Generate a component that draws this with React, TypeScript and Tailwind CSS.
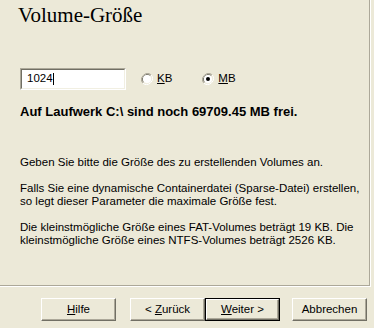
import React from "react";

const ui = { fontFamily: '"Liberation Sans", Arial, sans-serif' };

function Radio({ checked }: { checked?: boolean }) {
  return (
    <svg width="12" height="12" viewBox="0 0 12 12" className="shrink-0">
      <path d="M10.2 1.8 A6 6 0 0 0 1.8 10.2" fill="none" stroke="#ACA899" strokeWidth="1" />
      <path d="M1.8 10.2 A6 6 0 0 0 10.2 1.8" fill="none" stroke="#FFFFFF" strokeWidth="1" />
      <path d="M9.5 2.5 A5 5 0 0 0 2.5 9.5" fill="none" stroke="#716F64" strokeWidth="1" />
      <path d="M2.5 9.5 A5 5 0 0 0 9.5 2.5" fill="none" stroke="#F1EFE2" strokeWidth="1" />
      <circle cx="6" cy="6" r="4" fill="#FFFFFF" />
      {checked && <circle cx="6" cy="6" r="2" fill="#000000" />}
    </svg>
  );
}

function Button({
  children,
  isDefault,
}: {
  children: React.ReactNode;
  isDefault?: boolean;
}) {
  const inner = (
    <div className="flex-1 flex items-center justify-center border-t border-l border-white border-b border-r border-b-[#716F64] border-r-[#716F64] shadow-[inset_-1px_-1px_#ACA899] text-[11.5px] text-black">
      {children}
    </div>
  );
  return (
    <div
      className={
        isDefault
          ? "w-[75px] h-[23px] flex border border-black"
          : "w-[75px] h-[23px] flex"
      }
    >
      {inner}
    </div>
  );
}

export default function App() {
  return (
    <div
      className="w-[374px] h-[328px] bg-[#ECE9D8] flex flex-col overflow-hidden text-black"
      style={ui}
    >
      {/* content panel with etched edges */}
      <div className="w-[371px] h-[287px] border-r border-b border-white">
        <div className="w-[370px] h-[286px] border-r border-b border-[#ACA899] flex flex-col">
          <h1
            className="pl-[18px] pt-[5px] text-[21px] leading-[21px] font-normal"
            style={{ fontFamily: '"Liberation Serif", "Times New Roman", serif' }}
          >
            Volume-Größe
          </h1>

          <div className="flex items-center mt-[42px] pl-[20px] h-[22px]">
            <div className="w-[106px] h-[22px] border-t border-l border-[#ACA899] border-b border-r border-b-white border-r-white">
              <div className="h-full border-t border-l border-[#716F64] border-b border-r border-b-[#F1EFE2] border-r-[#F1EFE2] bg-white flex items-center pl-[5px] text-[11.5px]">
                1024
                <span className="inline-block w-px h-[12px] bg-black" />
              </div>
            </div>
            <div className="flex items-center ml-[15px] gap-[4px] text-[11.5px]">
              <Radio />
              <span>
                <span className="underline">K</span>B
              </span>
            </div>
            <div className="flex items-center ml-[30px] gap-[4px] text-[11.5px]">
              <Radio checked />
              <span>
                <span className="underline">M</span>B
              </span>
            </div>
          </div>

          <p className="pl-[20px] mt-[15px] text-[13px] leading-[14px] font-bold">
            Auf Laufwerk C:\ sind noch 69709.45 MB frei.
          </p>

          <div className="pl-[20px] mt-[37px] text-[11.5px] leading-[13px] flex flex-col gap-[13px]">
            <p>Geben Sie bitte die Größe des zu erstellenden Volumes an.</p>
            <p>
              Falls Sie eine dynamische Containerdatei (Sparse-Datei) erstellen,
              <br />
              so legt dieser Parameter die maximale Größe fest.
            </p>
            <p>
              Die kleinstmögliche Größe eines FAT-Volumes beträgt 19 KB. Die
              <br />
              kleinstmögliche Größe eines NTFS-Volumes beträgt 2526 KB.
            </p>
          </div>
        </div>
      </div>

      {/* wizard buttons */}
      <div className="flex items-center mt-[11px] pl-[41px]">
        <Button>
          <span>
            <span className="underline">H</span>ilfe
          </span>
        </Button>
        <div className="ml-[14px] flex">
          <Button>
            <span>
              &lt; <span className="underline">Z</span>urück
            </span>
          </Button>
          <Button isDefault>
            <span>
              <span className="underline">W</span>eiter &gt;
            </span>
          </Button>
        </div>
        <div className="ml-[12px]">
          <Button>Abbrechen</Button>
        </div>
      </div>
    </div>
  );
}
